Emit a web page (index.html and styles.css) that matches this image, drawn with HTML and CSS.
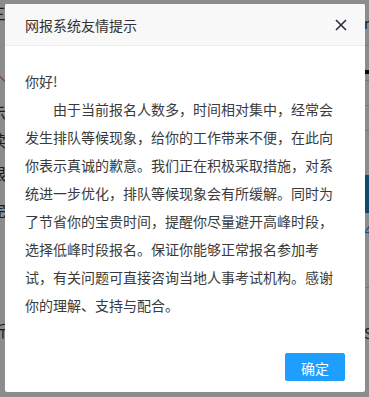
FILE: index.html
```html
<!DOCTYPE html>
<html>
<head>
    <meta charset="utf-8">
    <title>网报系统友情提示</title>
    <link rel="stylesheet" href="styles.css">
</head>
<body>
    <!-- 背景页面（被遮罩） -->
    <div class="page">
        <div class="strip strip-left">
            <span class="g">三</span>
            <span class="g mark">＼</span>
            <span class="g">示</span>
            <span class="g">读</span>
            <span class="g">限</span>
            <span class="g">完</span>
            <span class="g">所</span>
        </div>
        <div class="strip strip-right">
            <span class="r-text r-top">ng</span>
            <span class="r-line l1"></span>
            <span class="r-dot"></span>
            <span class="r-line l2"></span>
            <span class="r-line l3"></span>
            <span class="r-line l3"></span>
            <span class="r-block"></span>
            <span class="r-num">4</span>
            <span class="r-line l4"></span>
            <span class="r-text r-bottom">S</span>
        </div>
    </div>

    <div class="shade"></div>

    <!-- 弹窗 -->
    <div class="layer">
        <div class="layer-title">
            <span>网报系统友情提示</span>
            <svg class="layer-close" width="12" height="12" viewBox="0 0 12 12">
                <path d="M1 1 L11 11 M11 1 L1 11" stroke="#2e2d3a" stroke-width="1.6" fill="none"/>
            </svg>
        </div>
        <div class="layer-content">
            <p>你好!</p>
            <p class="indent">由于当前报名人数多，时间相对集中，经常会发生排队等候现象，给你的工作带来不便，在此向你表示真诚的歉意。我们正在积极采取措施，对系统进一步优化，排队等候现象会有所缓解。同时为了节省你的宝贵时间，提醒你尽量避开高峰时段，选择低峰时段报名。保证你能够正常报名参加考试，有关问题可直接咨询当地人事考试机构。感谢你的理解、支持与配合。</p>
        </div>
        <div class="layer-btn">
            <a class="btn">确定</a>
        </div>
    </div>
</body>
</html>
```

FILE: styles.css
```css
html, body {
    margin: 0;
    padding: 0;
}
body {
    width: 369px;
    height: 397px;
    overflow: hidden;
    position: relative;
    font-family: "Noto Sans CJK SC", "Liberation Sans", sans-serif;
    background: #fff;
    color: #333;
}
.page {
    display: flex;
    justify-content: space-between;
    height: 397px;
}
.strip {
    width: 5px;
    overflow: hidden;
    display: flex;
    flex-direction: column;
}
.strip-left .g {
    display: block;
    width: 16px;
    height: 20px;
    line-height: 20px;
    font-size: 16px;
    margin-left: -10px;
    color: #333;
}
.strip-left .mark {
    color: #c00;
}
.strip-left .g:nth-child(1) { margin-top: 3px; }
.strip-left .g:nth-child(2) { margin-top: 40px; }
.strip-left .g:nth-child(3) { margin-top: 19px; }
.strip-left .g:nth-child(4) { margin-top: 8px; }
.strip-left .g:nth-child(5) { margin-top: 13px; }
.strip-left .g:nth-child(6) { margin-top: 17px; }
.strip-left .g:nth-child(7) { margin-top: 100px; }

.r-text {
    display: block;
    font-size: 14px;
    line-height: 18px;
    color: #333;
}
.r-top { margin-top: 14px; }
.r-bottom { margin-top: 36px; }
.r-line {
    display: block;
    width: 5px;
    height: 1px;
    background: #d8d8d8;
}
.l1 { margin-top: 13px; }
.l2 { margin-top: 6px; }
.l3 { margin-top: 24px; }
.l4 { margin-top: 48px; }
.r-dot {
    display: block;
    width: 5px;
    height: 4px;
    background: #111;
    margin-top: 24px;
}
.r-block {
    display: block;
    width: 5px;
    height: 38px;
    background: #1a86cc;
    margin-top: 44px;
}
.r-num {
    display: block;
    font-size: 14px;
    line-height: 18px;
    color: #1e8fe0;
    margin-top: 8px;
}

.shade {
    position: absolute;
    left: 0;
    top: 0;
    right: 0;
    bottom: 0;
    background: rgba(0, 0, 0, 0.45);
}

.layer {
    position: absolute;
    left: 5px;
    top: 4px;
    width: 360px;
    height: 388px;
    background: #fff;
    border-radius: 2px;
    display: flex;
    flex-direction: column;
}
.layer-title {
    height: 41px;
    border-bottom: 1px solid #eee;
    background: #f8f8f8;
    padding: 0 18px 0 20px;
    font-size: 14px;
    color: #333;
    display: flex;
    align-items: center;
    justify-content: space-between;
    border-radius: 2px 2px 0 0;
}
.layer-close {
    display: block;
}
.layer-content {
    flex: 1;
    padding: 21px 20px 20px;
    font-size: 14px;
    line-height: 28px;
    color: #3a3a3a;
}
.layer-content p {
    margin: 0;
}
.layer-content .indent {
    text-indent: 2em;
}
.layer-btn {
    display: flex;
    justify-content: flex-end;
    padding: 0 20px 11px;
}
.btn {
    display: block;
    height: 28px;
    line-height: 28px;
    padding: 0 15px;
    border: 1px solid #1e9fff;
    background: #1e9fff;
    color: #fff;
    font-size: 14px;
    border-radius: 2px;
    box-sizing: border-box;
    width: 60px;
    text-align: center;
}
```
